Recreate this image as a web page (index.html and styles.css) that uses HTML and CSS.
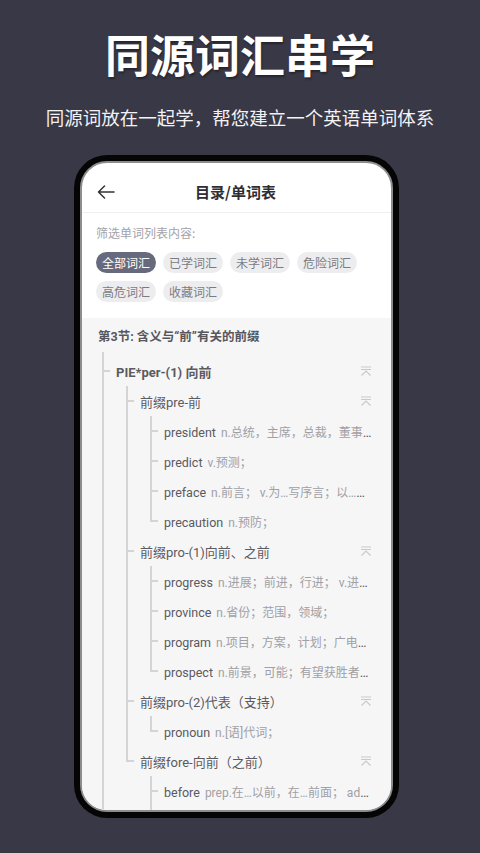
FILE: index.html
```html
<!DOCTYPE html>
<html lang="zh">
<head>
<meta charset="utf-8">
<title>同源词汇串学</title>
<link rel="stylesheet" href="styles.css">
</head>
<body>
<div class="hero">
  <h1 class="hero-title">同源词汇串学</h1>
  <p class="hero-sub">同源词放在一起学，帮您建立一个英语单词体系</p>
</div>
<div class="phone">
  <div class="screen">
    <div class="header">
      <svg class="back" width="18" height="14" viewBox="0 0 18 14"><path d="M17 7H1.5M7.5 1L1.5 7l6 6" fill="none" stroke="#333" stroke-width="1.5" stroke-linecap="round" stroke-linejoin="round"/></svg>
      <div class="header-title">目录/单词表</div>
    </div>
    <div class="filter">
      <div class="filter-label">筛选单词列表内容:</div>
      <div class="chips">
        <span class="chip active">全部词汇</span>
        <span class="chip">已学词汇</span>
        <span class="chip">未学词汇</span>
        <span class="chip">危险词汇</span>
        <span class="chip">高危词汇</span>
        <span class="chip">收藏词汇</span>
      </div>
    </div>
    <div class="tree-area">
      <div class="section-title">第3节: 含义与“前”有关的前缀</div>
      <div class="tree">
        <div class="node l1">
          <div class="row"><span class="label bold">PIE*per-(1) 向前</span><svg class="fold" width="12" height="10" viewBox="0 0 12 10"><path d="M1 1h10M1 3.5h10M1.5 9.5L6 5l4.5 4.5" fill="none" stroke="#c9c9c9" stroke-width="1.2"/></svg></div>
          <div class="children">
            <div class="node">
              <div class="row"><span class="label">前缀pre-前</span><svg class="fold" width="12" height="10" viewBox="0 0 12 10"><path d="M1 1h10M1 3.5h10M1.5 9.5L6 5l4.5 4.5" fill="none" stroke="#c9c9c9" stroke-width="1.2"/></svg></div>
              <div class="children">
                <div class="node"><div class="row"><span class="label"><span class="w">president</span><span class="m">n.总统，主席，总裁，董事长；</span></span></div></div>
                <div class="node"><div class="row"><span class="label"><span class="w">predict</span><span class="m">v.预测；</span></span></div></div>
                <div class="node"><div class="row"><span class="label"><span class="w">preface</span><span class="m">n.前言； v.为…写序言；以…为开端</span></span></div></div>
                <div class="node"><div class="row"><span class="label"><span class="w">precaution</span><span class="m">n.预防；</span></span></div></div>
              </div>
            </div>
            <div class="node">
              <div class="row"><span class="label">前缀pro-(1)向前、之前</span><svg class="fold" width="12" height="10" viewBox="0 0 12 10"><path d="M1 1h10M1 3.5h10M1.5 9.5L6 5l4.5 4.5" fill="none" stroke="#c9c9c9" stroke-width="1.2"/></svg></div>
              <div class="children">
                <div class="node"><div class="row"><span class="label"><span class="w">progress</span><span class="m">n.进展；前进，行进； v.进行，进步</span></span></div></div>
                <div class="node"><div class="row"><span class="label"><span class="w">province</span><span class="m">n.省份；范围，领域；</span></span></div></div>
                <div class="node"><div class="row"><span class="label"><span class="w">program</span><span class="m">n.项目，方案，计划；广电节目</span></span></div></div>
                <div class="node"><div class="row"><span class="label"><span class="w">prospect</span><span class="m">n.前景，可能；有望获胜者；勘探</span></span></div></div>
              </div>
            </div>
            <div class="node">
              <div class="row"><span class="label">前缀pro-(2)代表（支持）</span><svg class="fold" width="12" height="10" viewBox="0 0 12 10"><path d="M1 1h10M1 3.5h10M1.5 9.5L6 5l4.5 4.5" fill="none" stroke="#c9c9c9" stroke-width="1.2"/></svg></div>
              <div class="children">
                <div class="node"><div class="row"><span class="label"><span class="w">pronoun</span><span class="m">n.[语]代词；</span></span></div></div>
              </div>
            </div>
            <div class="node">
              <div class="row"><span class="label">前缀fore-向前（之前）</span><svg class="fold" width="12" height="10" viewBox="0 0 12 10"><path d="M1 1h10M1 3.5h10M1.5 9.5L6 5l4.5 4.5" fill="none" stroke="#c9c9c9" stroke-width="1.2"/></svg></div>
              <div class="children">
                <div class="node"><div class="row"><span class="label"><span class="w">before</span><span class="m">prep.在…以前，在…前面； adv.以前</span></span></div></div>
                <div class="node"><div class="row"><span class="label"><span class="w">forecast</span><span class="m">n.预报；</span></span></div></div>
              </div>
            </div>
          </div>
        </div>
      </div>
    </div>
  </div>
</div>
</body>
</html>
```
FILE: styles.css
```css
* { box-sizing: border-box; }
html, body { margin: 0; padding: 0; }
body {
  width: 480px;
  height: 853px;
  overflow: hidden;
  background: #393846;
  font-family: Roboto, "Noto Sans CJK SC", sans-serif;
}
.hero { text-align: center; color: #fff; padding-top: 31px; }
.hero-title {
  margin: 0;
  font-family: "Noto Sans CJK SC", sans-serif;
  font-size: 45px;
  line-height: 46px;
  font-weight: 700;
  text-shadow: 1px 2px 2px rgba(0,0,0,0.35);
}
.hero-sub {
  margin: 30px 0 0;
  font-family: "Noto Sans CJK SC", sans-serif;
  font-size: 18.5px;
  line-height: 20px;
  color: #f2f2f4;
}
.phone {
  margin: 28px 0 0 74px;
  width: 325px;
  height: 663px;
  background: #050505;
  border-radius: 33px;
  padding: 6px;
}
.screen {
  height: 651px;
  border: 2px solid #8d8d90;
  border-radius: 27px;
  background: #fff;
  overflow: hidden;
  display: flex;
  flex-direction: column;
}
.header {
  position: relative;
  flex: none;
  height: 50px;
  padding-top: 8px;
  display: flex;
  align-items: center;
  justify-content: center;
  border-bottom: 1px solid #efeff1;
}
.back { position: absolute; left: 15px; top: 22px; }
.header-title {
  font-family: "Noto Sans CJK SC", sans-serif;
  font-size: 15px;
  font-weight: 700;
  color: #2d2d33;
  margin-left: -2px;
}
.filter { flex: none; padding: 13px 14px 16px; }
.filter-label {
  font-family: "Noto Sans CJK SC", sans-serif;
  font-size: 12px;
  line-height: 14px;
  color: #a3a3a8;
}
.chips {
  margin-top: 12px;
  display: flex;
  flex-wrap: wrap;
  gap: 8px 7px;
  width: 270px;
}
.chip {
  width: 60px;
  height: 21px;
  line-height: 21px;
  border-radius: 11px;
  background: #ededf0;
  color: #7b7b82;
  text-align: center;
  font-family: "Noto Sans CJK SC", sans-serif;
  font-size: 12px;
}
.chip.active { background: #676a7d; color: #fff; }
.tree-area {
  flex: 1;
  background: #f6f6f7;
  padding: 3px 15px 0 16px;
  overflow: hidden;
}
.section-title {
  height: 31px;
  line-height: 31px;
  font-size: 12.5px;
  font-weight: 700;
  color: #56565c;
}
.tree { margin-left: 4px; }
.node { position: relative; }
.node::before {
  content: "";
  position: absolute;
  left: 0;
  top: 0;
  bottom: 0;
  width: 2px;
  background: #d4d4d7;
}
.node:last-child::before { bottom: auto; height: 15px; }
.node.l1 { padding-top: 4px; }
.node.l1::before { bottom: 0; height: auto; }
.row {
  position: relative;
  height: 30px;
  display: flex;
  align-items: center;
  padding-left: 14px;
  padding-right: 4px;
}
.row::before {
  content: "";
  position: absolute;
  left: 0;
  top: 14px;
  width: 8px;
  height: 2px;
  background: #d4d4d7;
}
.children { margin-left: 24px; }
.label {
  flex: 1;
  min-width: 0;
  white-space: nowrap;
  overflow: hidden;
  text-overflow: ellipsis;
  font-size: 13px;
  color: #5a5a60;
}
.label.bold { font-weight: 700; }
.w { font-size: 12.5px; color: #5a5a60; }
.m { margin-left: 5px; font-size: 12px; color: #a0a0a5; }
.fold { flex: none; margin-left: 8px; }
```
